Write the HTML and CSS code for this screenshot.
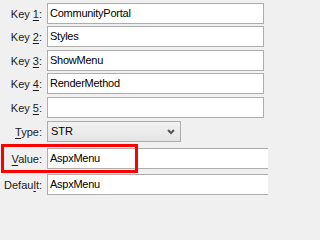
FILE: index.html
```html
<!DOCTYPE html>
<html>
<head>
<meta charset="utf-8">
<link rel="stylesheet" href="styles.css">
</head>
<body>
<div class="form">
  <div class="row r1"><div class="label">Key <u>1</u>:</div><div class="field">CommunityPortal</div></div>
  <div class="row r2"><div class="label">Key <u>2</u>:</div><div class="field">Styles</div></div>
  <div class="row r3"><div class="label">Key <u>3</u>:</div><div class="field">ShowMenu</div></div>
  <div class="row r4"><div class="label">Key <u>4</u>:</div><div class="field">RenderMethod</div></div>
  <div class="row r5"><div class="label">Key <u>5</u>:</div><div class="field"></div></div>
  <div class="row r6"><div class="label"><u>T</u>ype:</div><div class="select"><span>STR</span><svg class="chev" width="8" height="6" viewBox="0 0 8 6"><polyline points="1,1 4,4 7,1" fill="none" stroke="#555" stroke-width="2"/></svg></div></div>
  <div class="row r7"><div class="label"><u>V</u>alue:</div><div class="field wide">AspxMenu</div><div class="highlight"></div></div>
  <div class="row r8"><div class="label">Defau<u>l</u>t:</div><div class="field wide">AspxMenu</div></div>
</div>
</body>
</html>
```

FILE: styles.css
```css
html, body {
  margin: 0;
  padding: 0;
  background: #f0f0f0;
  overflow: hidden;
}
body {
  width: 268px;
  height: 200px;
  font-family: "Liberation Sans", Arial, sans-serif;
  font-size: 11px;
  color: #000;
}
.form {
  display: flex;
  flex-direction: column;
}
.row {
  display: flex;
  align-items: center;
  height: 21px;
  gap: 5px;
  position: relative;
}
.r1 { margin-top: 3px; }
.r2 { margin-top: 2px; }
.r3 { margin-top: 3px; }
.r4 { margin-top: 2px; }
.r5 { margin-top: 3px; }
.r6 { margin-top: 3px; }
.r7 { margin-top: 6px; }
.r8 { margin-top: 5px; }
.label {
  width: 42px;
  flex: none;
  text-align: right;
  color: #1a1a1a;
}
.label u {
  text-decoration-thickness: 1px;
  text-underline-offset: 2px;
}
.field {
  box-sizing: border-box;
  width: 217px;
  height: 21px;
  flex: none;
  border: 1px solid #adadad;
  background: #fff;
  padding-left: 2px;
  line-height: 19px;
  letter-spacing: -0.25px;
  white-space: nowrap;
}
.field.wide {
  width: 240px;
}
.select {
  box-sizing: border-box;
  width: 134px;
  height: 21px;
  flex: none;
  border: 1px solid #acacac;
  background: linear-gradient(#f2f2f2, #e5e5e5);
  padding-left: 3px;
  padding-right: 5px;
  display: flex;
  align-items: center;
  justify-content: space-between;
  line-height: 19px;
}
.chev {
  display: block;
}
.highlight {
  position: absolute;
  left: 1px;
  top: -4px;
  width: 137px;
  height: 29px;
  box-sizing: border-box;
  border: 3px solid #ff0000;
  pointer-events: none;
}
```
